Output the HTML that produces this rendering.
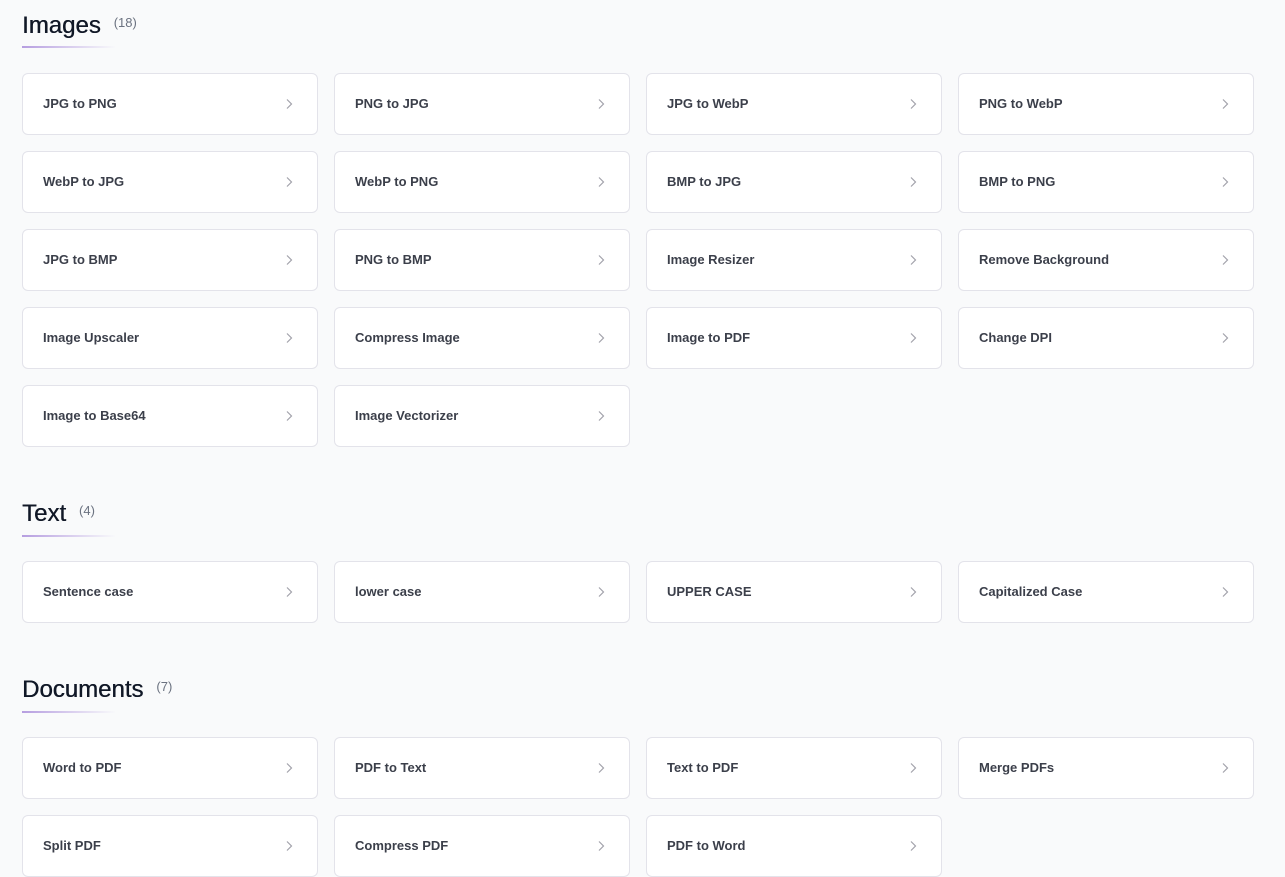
<!DOCTYPE html>
<html><head><style>
*{margin:0;padding:0;box-sizing:border-box}
body{width:1285px;height:849px;overflow:hidden;background:#f9fafb;font-family:"Liberation Sans",sans-serif;position:relative}
.h{position:absolute;left:22px;font-size:24px;color:#111827;font-weight:500;text-shadow:0.4px 0 0 #111827}
.h span{font-size:13px;color:#6b7280;margin-left:13px;vertical-align:6px;text-shadow:none}
.u{position:absolute;left:22px;width:94px;height:2px;background:linear-gradient(90deg,#b69ee0,rgba(182,158,224,0))}
.c{position:absolute;width:296px;height:62px;background:#fff;border:1px solid #e3e3ea;border-radius:6px;font-size:13px;font-weight:bold;color:#3b3f4a;padding-left:20px;line-height:60px}
.c svg{position:absolute;right:24px;top:24px}
</style></head><body>
<div class="h" style="top:12px">Images<span>(18)</span></div><div class="u" style="top:46px"></div>
<div class="h" style="top:500px">Text<span>(4)</span></div><div class="u" style="top:535px"></div>
<div class="h" style="top:676px">Documents<span>(7)</span></div><div class="u" style="top:711px"></div>
<div id="g"></div>
<script>
const sets=[[73,["JPG to PNG","PNG to JPG","JPG to WebP","PNG to WebP","WebP to JPG","WebP to PNG","BMP to JPG","BMP to PNG","JPG to BMP","PNG to BMP","Image Resizer","Remove Background","Image Upscaler","Compress Image","Image to PDF","Change DPI","Image to Base64","Image Vectorizer"]],[561,["Sentence case","lower case","UPPER CASE","Capitalized Case"]],[737,["Word to PDF","PDF to Text","Text to PDF","Merge PDFs","Split PDF","Compress PDF","PDF to Word"]]];
let h="";
for(const [y0,l] of sets)l.forEach((t,i)=>{const x=22+(i%4)*312,y=y0+Math.floor(i/4)*78;
h+=`<div class="c" style="left:${x}px;top:${y}px">${t}<svg width="8" height="12" viewBox="0 0 8 12"><path d="M2 1.5l4.5 4.5-4.5 4.5" fill="none" stroke="#a1a1aa" stroke-width="1.2"/></svg></div>`;});
document.getElementById("g").innerHTML=h;
</script>
</body></html>
